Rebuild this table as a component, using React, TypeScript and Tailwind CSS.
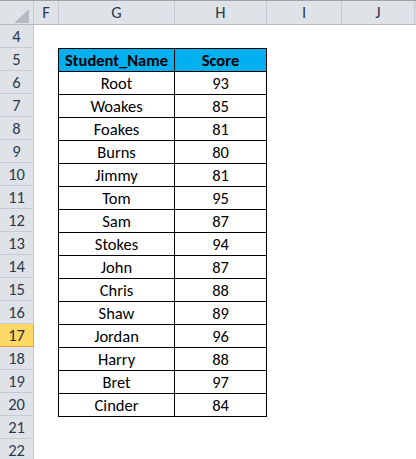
import React from "react";

const students: [string, number][] = [
  ["Root", 93],
  ["Woakes", 85],
  ["Foakes", 81],
  ["Burns", 80],
  ["Jimmy", 81],
  ["Tom", 95],
  ["Sam", 87],
  ["Stokes", 94],
  ["John", 87],
  ["Chris", 88],
  ["Shaw", 89],
  ["Jordan", 96],
  ["Harry", 88],
  ["Bret", 97],
  ["Cinder", 84],
];

const font = { fontFamily: "Carlito, Lato, 'Open Sans', sans-serif" };

const ColHead = ({ label, w }: { label: string; w: string }) => (
  <div
    className={`${w} h-full flex items-center justify-center border-r border-[#c4cad2] text-[16.5px] text-[#2a3a4d]`}
  >
    {label}
  </div>
);

const Row = ({ n, name, score }: { n: number; name?: string; score?: number | string }) => {
  const inTable = n >= 5 && n <= 20;
  const isHead = n === 5;
  const active = n === 17;
  return (
    <div className="flex h-[23px]">
      <div
        className={`w-[34px] shrink-0 flex items-center justify-center text-[16.5px] border-r border-b ${
          active
            ? "bg-[#ffd865] border-[#e8a33c] text-[#2a2a2a]"
            : "bg-[#dfe3e8] border-[#c4cad2] text-[#2a3a4d]"
        }`}
      >
        {n}
      </div>
      <div className="w-[24px] shrink-0" />
      <div
        className={`w-[116px] shrink-0 flex items-center justify-center text-[16.5px] text-black ${
          inTable ? "border-l border-t border-black" : n === 21 ? "border-t border-black" : ""
        } ${isHead ? "bg-[#00b0f0] font-bold" : ""}`}
      >
        {name}
      </div>
      <div
        className={`w-[93px] shrink-0 flex items-center justify-center text-[16.5px] text-black ${
          inTable ? "border-l border-t border-r border-black" : n === 21 ? "border-t border-black" : ""
        } ${isHead ? "bg-[#00b0f0] font-bold" : ""}`}
      >
        {score}
      </div>
      <div className="flex-1" />
    </div>
  );
};

export default function App() {
  const rows = [4, 5, 6, 7, 8, 9, 10, 11, 12, 13, 14, 15, 16, 17, 18, 19, 20, 21, 22];
  return (
    <div className="w-[416px] h-[459px] overflow-hidden bg-white" style={font}>
      <div className="flex h-[25px] border-t border-b border-t-[#9aa3ad] border-b-[#b4bcc6] bg-[#dfe3e8] box-border">
        <div className="w-[34px] h-full relative border-r border-[#c4cad2]">
          <svg className="absolute left-[14px] top-[8px]" width="15" height="14" viewBox="0 0 15 14">
            <polygon points="15,0 15,14 0,14" fill="#b5bbc3" />
          </svg>
        </div>
        <ColHead label="F" w="w-[25px]" />
        <ColHead label="G" w="w-[116px]" />
        <ColHead label="H" w="w-[92px]" />
        <ColHead label="I" w="w-[75px]" />
        <ColHead label="J" w="w-[73px]" />
        <div className="flex-1 bg-[#d3d8de]" />
      </div>
      {rows.map((n) => {
        if (n === 5) return <Row key={n} n={n} name="Student_Name" score="Score" />;
        if (n >= 6 && n <= 20) {
          const [name, score] = students[n - 6];
          return <Row key={n} n={n} name={name} score={score} />;
        }
        return <Row key={n} n={n} />;
      })}
    </div>
  );
}
